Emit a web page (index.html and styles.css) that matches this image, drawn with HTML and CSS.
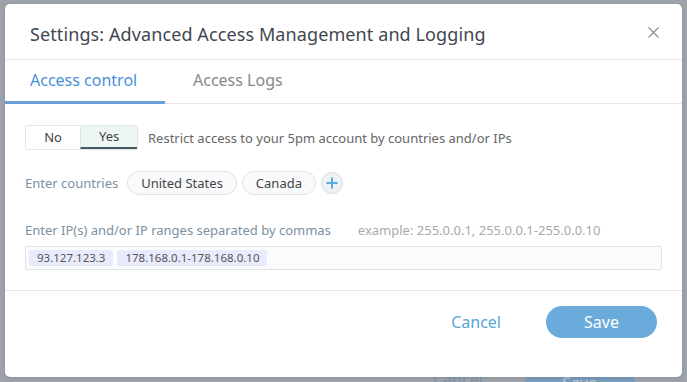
FILE: index.html
```html
<!DOCTYPE html>
<html lang="en">
<head>
    <meta charset="UTF-8">
    <title>Settings: Advanced Access Management and Logging</title>
    <link rel="stylesheet" href="styles.css">
</head>
<body>
    <div class="ghost-footer">
        <span class="ghost-cancel">Cancel</span>
        <span class="ghost-save">Save</span>
    </div>

    <div class="modal">
        <div class="modal-header">
            <h2>Settings: Advanced Access Management and Logging</h2>
            <button type="button" class="close-btn" aria-label="Close">
                <svg width="11" height="11" viewBox="0 0 11 11">
                    <path d="M0.5 0.5 L10.5 10.5 M10.5 0.5 L0.5 10.5" stroke="#8a8a8a" stroke-width="1.1" fill="none"/>
                </svg>
            </button>
        </div>

        <div class="tabs">
            <div class="tab active">Access control</div>
            <div class="tab">Access Logs</div>
        </div>

        <div class="modal-body">
            <div class="row">
                <div class="toggle">
                    <span class="toggle-opt">No</span>
                    <span class="toggle-opt selected">Yes</span>
                </div>
                <span class="hint">Restrict access to your 5pm account by countries and/or IPs</span>
            </div>

            <div class="row countries">
                <span class="field-label">Enter countries</span>
                <span class="chip">United States</span>
                <span class="chip">Canada</span>
                <button type="button" class="add-btn" aria-label="Add country">
                    <svg width="12" height="12" viewBox="0 0 12 12">
                        <path d="M6 0.5 V11.5 M0.5 6 H11.5" stroke="#55aee0" stroke-width="2" fill="none"/>
                    </svg>
                </button>
            </div>

            <div class="ip-label">
                <span class="field-label">Enter IP(s) and/or IP ranges separated by commas</span>
                <span class="example">example: 255.0.0.1, 255.0.0.1-255.0.0.10</span>
            </div>
            <div class="ip-input">
                <span class="ip-tag">93.127.123.3</span>
                <span class="ip-tag">178.168.0.1-178.168.0.10</span>
            </div>
        </div>

        <div class="modal-footer">
            <button type="button" class="cancel-btn">Cancel</button>
            <button type="button" class="save-btn">Save</button>
        </div>
    </div>
</body>
</html>
```

FILE: styles.css
```css
body {
    margin: 0;
    width: 687px;
    height: 382px;
    overflow: hidden;
    background-color: #9ea3ab;
    font-family: "Noto Sans", "Open Sans", sans-serif;
    position: relative;
}

/* page behind the overlay, barely visible */
.ghost-footer {
    position: absolute;
    left: 433px;
    top: 368px;
    display: flex;
    gap: 42px;
    font-size: 16px;
}

.ghost-cancel {
    color: #7b93b0;
}

.ghost-save {
    width: 110px;
    height: 30px;
    border-radius: 15px;
    background-color: #7a9cbc;
    color: #b9c9d8;
    text-align: center;
    line-height: 30px;
}

.modal {
    position: relative;
    margin: 4px 0 0 5px;
    width: 677px;
    height: 373px;
    background-color: white;
    border-radius: 5px;
    box-shadow: 0 1px 4px rgba(0, 0, 0, 0.12);
    display: flex;
    flex-direction: column;
}

.modal-header {
    height: 56px;
    border-bottom: 1px solid #e6e6e6;
    display: flex;
    align-items: center;
    justify-content: space-between;
    padding: 5px 23px 0 25px;
    box-sizing: border-box;
}

.modal-header h2 {
    margin: 0;
    font-size: 18px;
    font-weight: normal;
    color: #3f4751;
    letter-spacing: 0.1px;
}

.close-btn {
    border: none;
    background: none;
    padding: 0;
    cursor: pointer;
    display: flex;
    margin-bottom: 3px;
}

.tabs {
    display: flex;
    border-bottom: 1px solid #e6e6e6;
}

.tab {
    padding: 9px 25px 10px;
    font-size: 16px;
    color: #888;
    border-bottom: 3px solid transparent;
    margin-bottom: -1px;
}

.tab.active {
    color: #4a90d9;
    border-bottom-color: #6b9fd5;
    width: 110px;
}

.tab + .tab {
    padding-left: 28px;
}

.modal-body {
    padding: 21px 20px 20px;
    border-bottom: 1px solid #e6e6e6;
}

.row {
    display: flex;
    align-items: center;
}

.toggle {
    display: flex;
    border: 1px solid #e3e6e8;
    border-radius: 2px;
    height: 25px;
    box-sizing: border-box;
    margin-right: 10px;
}

.toggle-opt {
    font-size: 13px;
    color: #444;
    line-height: 23px;
    padding: 0 18px;
    width: 54px;
    box-sizing: border-box;
    text-align: center;
}

.toggle-opt.selected {
    width: 57px;
    background-color: #eef6f3;
    border-left: 1px solid #e3e6e8;
    border-bottom: 2px solid #485a60;
    line-height: 21px;
}

.hint {
    font-size: 13px;
    color: #666;
}

.countries {
    margin-top: 21px;
}

.field-label {
    font-size: 13px;
    color: #7d8fa0;
}

.countries .field-label {
    margin-right: 9px;
}

.chip {
    font-size: 13px;
    color: #444;
    border: 1px solid #dfe3e6;
    background-color: #f8fafb;
    border-radius: 12px;
    height: 24px;
    line-height: 22px;
    padding: 0 13px;
    box-sizing: border-box;
    margin-right: 5px;
}

.add-btn {
    width: 22px;
    height: 22px;
    border-radius: 50%;
    border: 1px solid #d8dde0;
    background-color: #eef2f4;
    padding: 0;
    display: flex;
    align-items: center;
    justify-content: center;
}

.ip-label {
    margin-top: 26px;
    display: flex;
    gap: 27px;
}

.example {
    font-size: 13px;
    color: #a9a9a9;
}

.ip-input {
    margin-top: 7px;
    height: 24px;
    border: 1px solid #dde2e7;
    border-radius: 2px;
    background-color: #fafcfe;
    display: flex;
    align-items: center;
    gap: 4px;
    padding: 0 3px;
    box-sizing: border-box;
}

.ip-tag {
    font-size: 11.5px;
    color: #555;
    background-color: #e9ebfd;
    border-radius: 2px;
    padding: 0 8px;
    line-height: 16px;
}

.modal-footer {
    display: flex;
    justify-content: flex-end;
    align-items: flex-start;
    padding: 15px 25px 0;
}

.cancel-btn {
    border: none;
    background: none;
    font-family: inherit;
    font-size: 16px;
    color: #5aa5dc;
    height: 32px;
    padding: 0;
    margin-right: 45px;
    cursor: pointer;
}

.save-btn {
    border: none;
    background-color: #6aabdb;
    color: white;
    font-family: inherit;
    font-size: 16px;
    width: 111px;
    height: 32px;
    border-radius: 16px;
    cursor: pointer;
}
```
